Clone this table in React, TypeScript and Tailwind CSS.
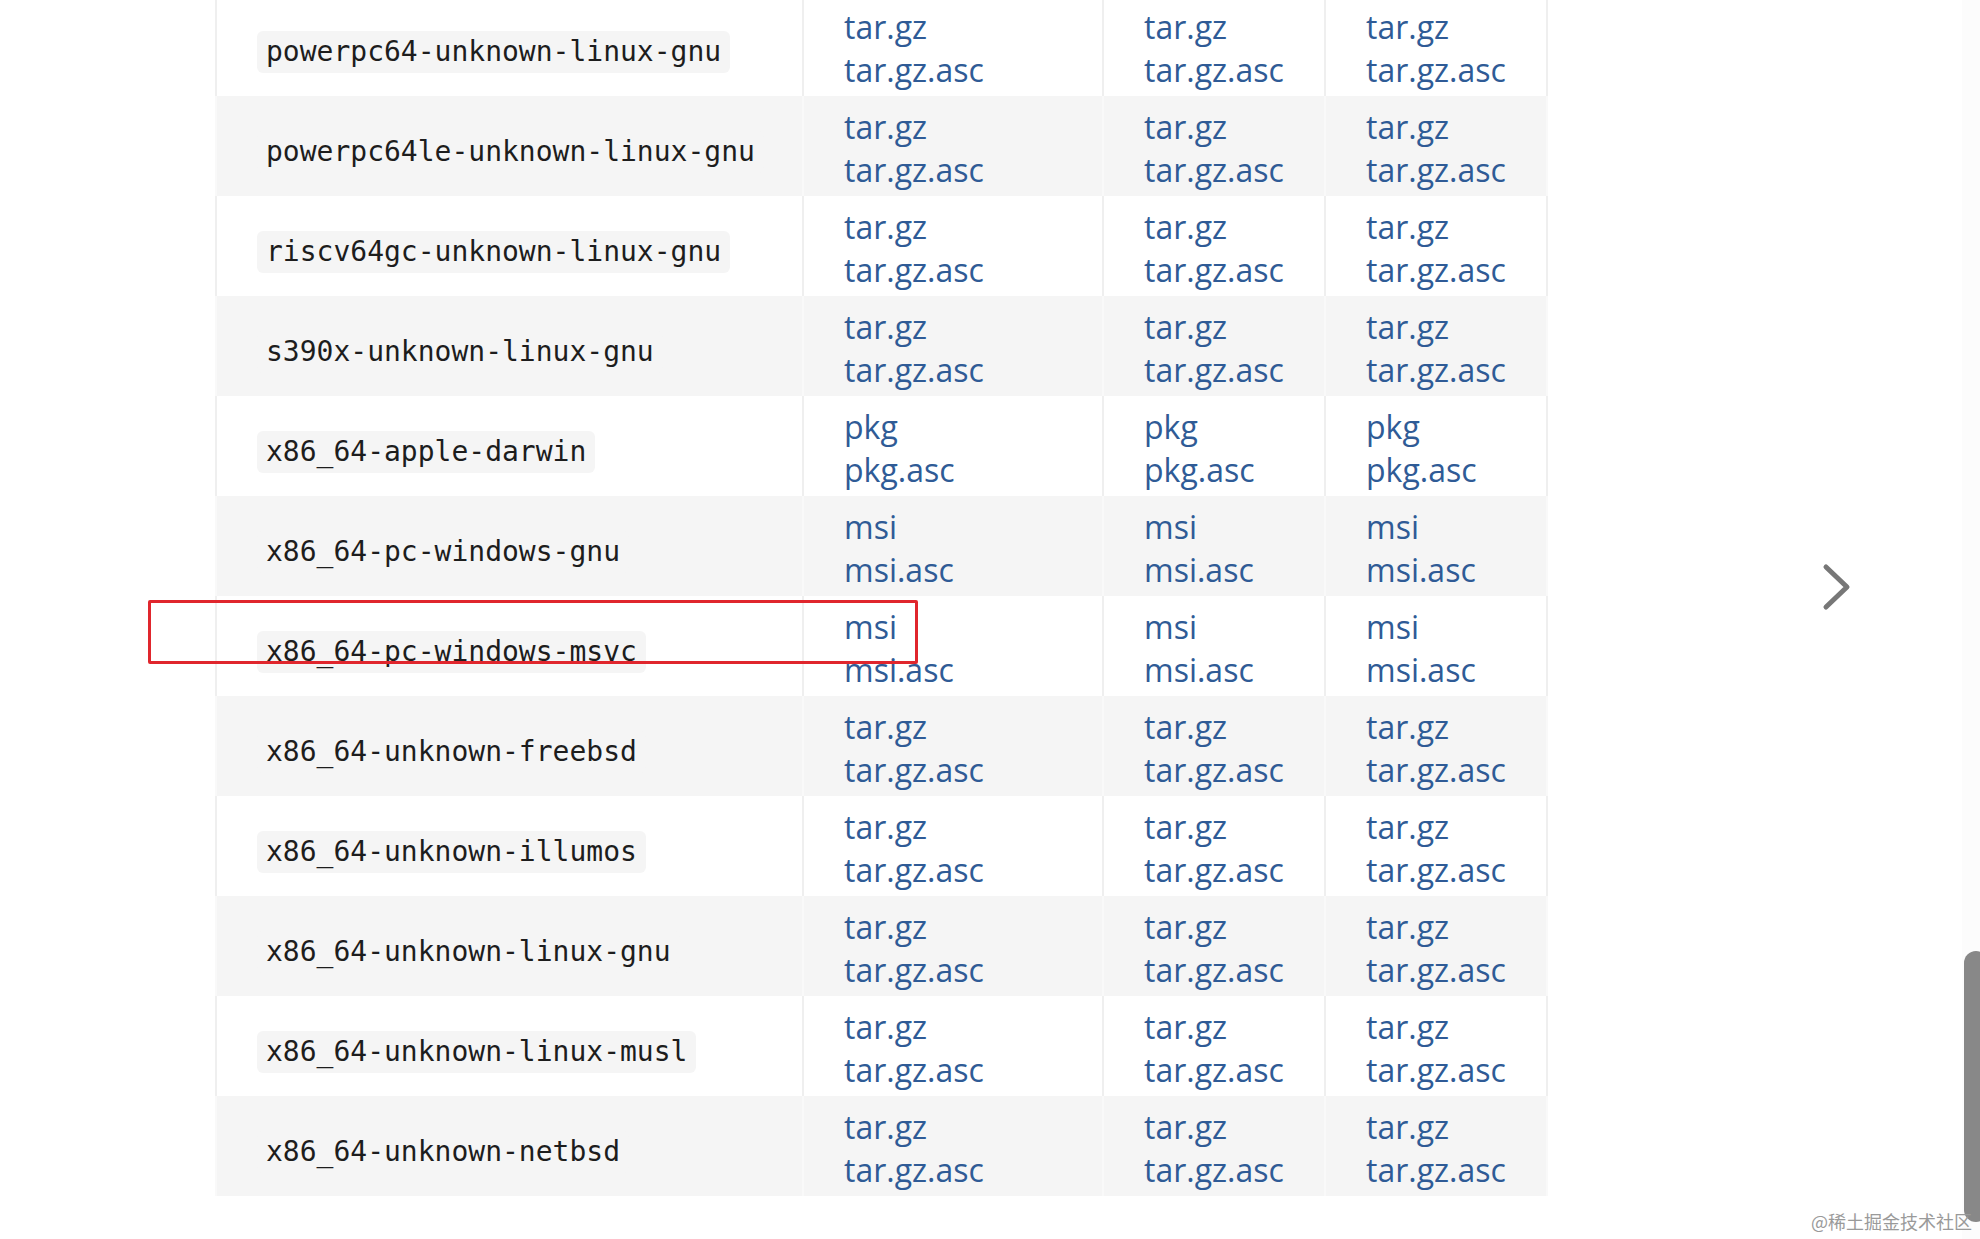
import React from "react";

const targets = [
    { name: "powerpc64-unknown-linux-gnu", ext: "tar.gz" },
    { name: "powerpc64le-unknown-linux-gnu", ext: "tar.gz" },
    { name: "riscv64gc-unknown-linux-gnu", ext: "tar.gz" },
    { name: "s390x-unknown-linux-gnu", ext: "tar.gz" },
    { name: "x86_64-apple-darwin", ext: "pkg" },
    { name: "x86_64-pc-windows-gnu", ext: "msi" },
    { name: "x86_64-pc-windows-msvc", ext: "msi" },
    { name: "x86_64-unknown-freebsd", ext: "tar.gz" },
    { name: "x86_64-unknown-illumos", ext: "tar.gz" },
    { name: "x86_64-unknown-linux-gnu", ext: "tar.gz" },
    { name: "x86_64-unknown-linux-musl", ext: "tar.gz" },
    { name: "x86_64-unknown-netbsd", ext: "tar.gz" },
];

const Links = ({ ext }: { ext: string }) => (
    <div className="flex flex-col text-[32px] leading-[43px] text-[#2f5b96]">
        <a href="#">{ext}</a>
        <a href="#">{ext}.asc</a>
    </div>
);

const App = () => {
    return (
        <div
            className="relative w-full h-[1239px] overflow-hidden bg-white"
            style={{ fontFamily: '"Open Sans", "Noto Sans", sans-serif' }}
        >
            <table className="ml-[215px] -mt-[4px] border-collapse table-fixed w-[1331px]">
                <colgroup>
                    <col className="w-[587px]" />
                    <col className="w-[300px]" />
                    <col className="w-[222px]" />
                    <col className="w-[222px]" />
                </colgroup>
                <tbody>
                    {targets.map((t, i) => {
                        const odd = i % 2 === 1;
                        const cell = odd
                            ? "border-l-2 border-[#f9f9f9] align-middle pt-[4px]"
                            : "border-l-2 border-[#efefef] align-middle pt-[4px]";
                        return (
                            <tr
                                key={t.name}
                                className={odd ? "h-[100px] bg-[#f5f5f5]" : "h-[100px] bg-white"}
                            >
                                <td className={cell + " pl-[40px]"}>
                                    <code
                                        className="inline-block translate-y-[4px] rounded-md bg-[#f5f5f5] px-[9px] text-[28px] leading-[42px] text-[#1d1d1d]"
                                        style={{ fontFamily: '"DejaVu Sans Mono", "Liberation Mono", monospace' }}
                                    >
                                        {t.name}
                                    </code>
                                </td>
                                <td className={cell + " pl-[40px]"}>
                                    <Links ext={t.ext} />
                                </td>
                                <td className={cell + " pl-[40px]"}>
                                    <Links ext={t.ext} />
                                </td>
                                <td className={cell + " pl-[40px] border-r-2"}>
                                    <Links ext={t.ext} />
                                </td>
                            </tr>
                        );
                    })}
                </tbody>
            </table>

            {/* annotation box */}
            <div className="absolute left-[148px] top-[600px] w-[770px] h-[64px] border-[3px] border-[#e0262d] rounded-[2px]" />

            {/* next arrow */}
            <svg
                className="absolute left-[1818px] top-[560px]"
                width="38"
                height="54"
                viewBox="0 0 38 54"
                fill="none"
            >
                <path
                    d="M8 7 L29 27 L8 47"
                    stroke="#777777"
                    strokeWidth="5"
                    strokeLinecap="round"
                    strokeLinejoin="round"
                />
            </svg>

            {/* scrollbar */}
            <div className="absolute right-0 top-0 h-full w-[18px] bg-[#fcfcfc]" />
            <div className="absolute right-[-8px] top-[951px] w-[24px] h-[271px] rounded-full bg-[#888888]" />

            <div
                className="absolute right-[8px] top-[1208px] text-[18px] text-[#9a9a9a]"
                style={{ fontFamily: '"Noto Sans CJK SC", "Noto Sans", sans-serif' }}
            >
                @稀土掘金技术社区
            </div>
        </div>
    );
};

export default App;
